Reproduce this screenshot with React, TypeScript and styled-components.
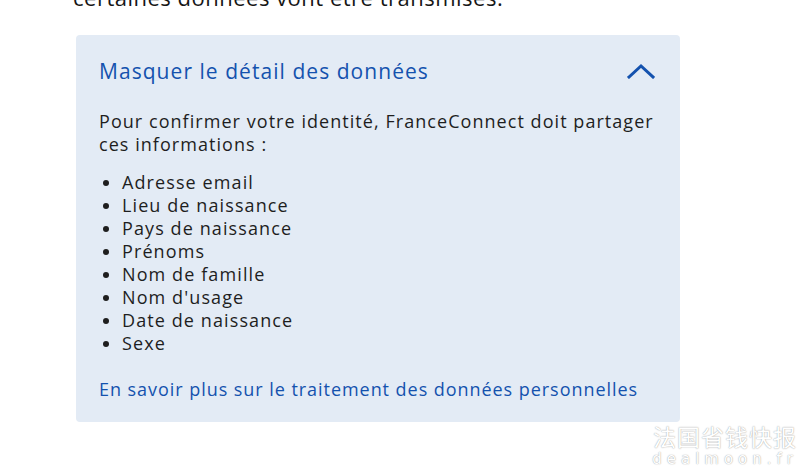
import React from "react";
import styled, { createGlobalStyle } from "styled-components";

const Global = createGlobalStyle`
  html, body { margin: 0; padding: 0; background: #ffffff; }
  body { font-family: "Open Sans", "Noto Sans", sans-serif; color: #161616; overflow: hidden; }
`;

const Page = styled.div`
  width: 800px;
  height: 476px;
  position: relative;
  overflow: hidden;
  background: #ffffff;
`;

const Intro = styled.p`
  margin: -17px 0 0 73px;
  font-size: 22px;
  letter-spacing: 0.5px;
  line-height: 28px;
  color: #161616;
`;

const Panel = styled.section`
  margin: 24px 0 0 76px;
  width: 604px;
  height: 387px;
  box-sizing: border-box;
  background: #e3ebf5;
  border-radius: 4px;
  padding: 22px 24px 0 23px;
  display: flex;
  flex-direction: column;
`;

const Header = styled.div`
  display: flex;
  align-items: center;
  justify-content: space-between;
  height: 28px;
`;

const Title = styled.h3`
  margin: 0;
  font-weight: 400;
  font-size: 21px;
  letter-spacing: 1.05px;
  color: #1452ae;
`;

const Chevron = styled.svg`
  width: 28px;
  height: 16px;
  margin-right: 1px;
`;

const Body = styled.p`
  margin: 25px -6px 0 0;
  font-size: 18px;
  letter-spacing: 1.05px;
  line-height: 23px;
  color: #1e1e1e;
`;

const List = styled.ul`
  margin: 15px 0 0 0;
  padding: 0 0 0 23px;
  font-size: 18px;
  letter-spacing: 1.1px;
  line-height: 23px;
  color: #1e1e1e;
`;

const Item = styled.li`
  padding-left: 0;
`;

const Link = styled.a`
  margin-top: 23px;
  font-size: 18px;
  letter-spacing: 0.95px;
  line-height: 23px;
  color: #1452ae;
  text-decoration: none;
`;

const Watermark = styled.div`
  position: absolute;
  right: 2px;
  bottom: 11px;
  display: flex;
  flex-direction: column;
  align-items: center;
  gap: 5px;
  color: #ffffff;
  text-shadow: 0 0 1px rgba(0, 0, 0, 0.35), 0 0 2px rgba(0, 0, 0, 0.15);
  font-family: "Noto Sans CJK SC", sans-serif;
`;

const WmCn = styled.div`
  font-size: 23px;
  line-height: 24px;
  letter-spacing: 1px;
`;

const WmLatin = styled.div`
  font-family: "DejaVu Sans", sans-serif;
  font-size: 15px;
  line-height: 12px;
  letter-spacing: 5px;
`;

const items = [
  "Adresse email",
  "Lieu de naissance",
  "Pays de naissance",
  "Prénoms",
  "Nom de famille",
  "Nom d'usage",
  "Date de naissance",
  "Sexe",
];

export default function App() {
  return (
    <Page>
      <Global />
      <Intro>certaines données vont être transmises.</Intro>
      <Panel>
        <Header>
          <Title>Masquer le détail des données</Title>
          <Chevron viewBox="0 0 28 16" fill="none">
            <path d="M2 14 L14 3 L26 14" stroke="#1452ae" strokeWidth="3" strokeLinecap="square" />
          </Chevron>
        </Header>
        <Body>
          Pour confirmer votre identité, FranceConnect doit partager ces informations :
        </Body>
        <List>
          {items.map((t) => (
            <Item key={t}>{t}</Item>
          ))}
        </List>
        <Link href="#">En savoir plus sur le traitement des données personnelles</Link>
      </Panel>
      <Watermark>
        <WmCn>法国省钱快报</WmCn>
        <WmLatin>dealmoon.fr</WmLatin>
      </Watermark>
    </Page>
  );
}
